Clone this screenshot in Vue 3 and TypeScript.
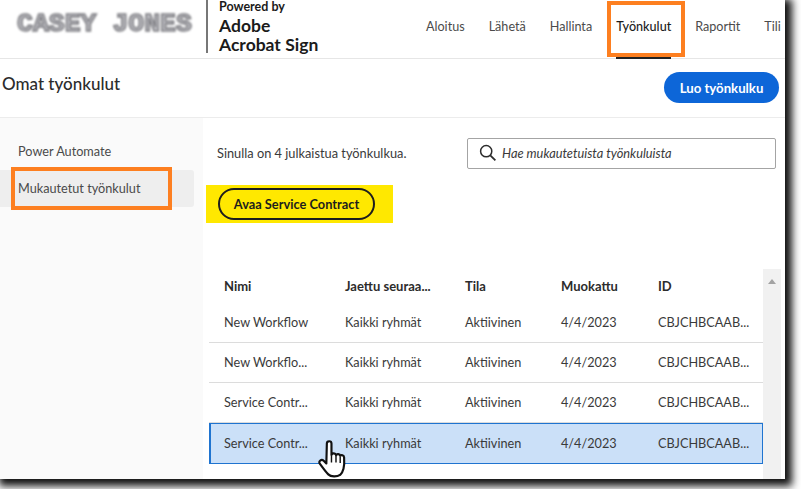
<script setup lang="ts">
const nav: string[] = ['Aloitus', 'Lähetä', 'Hallinta', 'Työnkulut', 'Raportit', 'Tili']
const rows = [
  { name: 'New Workflow', selected: false },
  { name: 'New Workflo...', selected: false },
  { name: 'Service Contr...', selected: false },
  { name: 'Service Contr...', selected: true },
]
</script>

<template>
  <div class="page">
    <div class="window">
      <header class="top">
        <div class="logo"><span>CASEY JONES</span></div>
        <div class="brand">
          <span class="powered">Powered by</span>
          <span class="adobe first">Adobe</span>
          <span class="adobe">Acrobat Sign</span>
        </div>
        <nav class="nav">
          <span v-for="n in nav" :key="n" class="nav-item" :class="{ active: n === 'Työnkulut' }">{{ n }}</span>
        </nav>
      </header>
      <div class="title-row">
        <h1>Omat työnkulut</h1>
        <button class="create">Luo työnkulku</button>
      </div>
      <div class="body">
        <aside class="side">
          <div class="side-item">Power Automate</div>
          <div class="side-item current">Mukautetut työnkulut</div>
        </aside>
        <main class="main">
          <div class="tools">
            <span class="count">Sinulla on 4 julkaistua työnkulkua.</span>
            <div class="search">
              <svg width="18" height="18" viewBox="0 0 18 18" fill="none" stroke="#2c2c2c" stroke-width="1.5">
                <circle cx="7.2" cy="7.2" r="5.6" />
                <path d="M11.3 11.3 L16.4 16.4" stroke-width="1.8" />
              </svg>
              <span>Hae mukautetuista työnkuluista</span>
            </div>
          </div>
          <div class="mark">
            <button class="open">Avaa Service Contract</button>
          </div>
          <div class="table-wrap">
            <div class="table">
              <div class="row head">
                <span>Nimi</span><span>Jaettu seuraa...</span><span>Tila</span><span>Muokattu</span><span>ID</span>
              </div>
              <div v-for="(r, i) in rows" :key="i" class="row" :class="{ selected: r.selected }">
                <span>{{ r.name }}</span><span>Kaikki ryhmät</span><span>Aktiivinen</span><span>4/4/2023</span><span>CBJCHBCAAB...</span>
              </div>
            </div>
            <div class="scroll"><i></i></div>
          </div>
        </main>
      </div>
      <div class="hl hl-nav"></div>
      <div class="hl hl-side"></div>
      <svg class="hand" width="31" height="39" viewBox="0 0 30 38">
        <path d="M9.5 3.5c0-3 4.500-3 4.500 0v11c.6-2 4-2 4.400.3.8-1.600 3.800-1.300 4.100.7 1-1.200 3.600-.8 3.800 1.500.3 4 .2 8-.6 11-.6 2.600-1.800 4.500-3.300 6-3 2-9 2-11.500-.5-2.500-2.500-5.400-6.500-8.300-10.500-1.700-2.300 1.600-4.800 3.800-2.700l2.600 2.500z" fill="#fff" stroke="#111" stroke-width="2.1" stroke-linejoin="round" />
        <path d="M14 15v7M18.400 15v7M22.500 16.500v6" stroke="#111" stroke-width="1.400" fill="none" />
      </svg>
    </div>
  </div>
</template>

<style>
html, body { margin: 0; background: #fff; }
</style>

<style scoped>
.page {
  width: 801px;
  height: 489px;
  overflow: hidden;
  background: #fff;
  font-family: "Lato", "Noto Sans", sans-serif;
  color: #2f2f2f;
}
.window {
  position: relative;
  width: 785px;
  height: 479px;
  background: #fff;
  box-shadow: 3px 3px 8px 4px #111;
}
.top {
  display: flex;
  align-items: flex-start;
  height: 59px;
  box-sizing: border-box;
  border-bottom: 1px solid #e6e6e6;
}
.logo {
  width: 206px;
  height: 58px;
  padding: 9px 0 0 17px;
  box-sizing: border-box;
  overflow: hidden;
  font-family: "Liberation Mono", monospace;
  font-weight: 700;
  font-size: 26.5px;
  line-height: 30px;
  white-space: nowrap;
  color: #bdbdc2;
  -webkit-text-stroke: 1.6px #7d7d82;
}
.logo span { display: inline-block; filter: blur(.8px); }
.brand {
  display: flex;
  flex-direction: column;
  height: 53px;
  padding-left: 11px;
  border-left: 2px solid #777;
  color: #1b1b1b;
  font-weight: 700;
  white-space: nowrap;
}
.powered { font-size: 12.5px; line-height: 14px; }
.adobe { font-size: 17.5px; line-height: 19px; }
.adobe.first { margin-top: 2px; }
.nav {
  margin-left: auto;
  display: flex;
  height: 100%;
  width: 385px;
  gap: 24px;
  padding-left: 26px;
  box-sizing: border-box;
  font-size: 12.6px;
}
.nav-item {
  position: relative;
  height: 58px;
  line-height: 54px;
  color: #4b4b4b;
  white-space: nowrap;
}
.nav-item.active { color: #1c1c1c; font-weight: 500; }
.nav-item.active::after {
  content: "";
  position: absolute;
  left: 0;
  right: 0;
  bottom: -1px;
  height: 2px;
  background: #222;
}
.title-row {
  height: 59px;
  box-sizing: border-box;
  border-bottom: 1px solid #ececec;
  display: flex;
  align-items: flex-start;
  justify-content: space-between;
  padding: 14px 6px 0 2px;
}
h1 {
  margin: 0;
  font-size: 17px;
  font-weight: 500;
  line-height: 22px;
  color: #2c2c2c;
}
.create {
  width: 115px;
  height: 31px;
  margin-top: -1px;
  padding: 0;
  border: 0;
  border-radius: 16px;
  background: #0d66d8;
  color: #fff;
  font: 700 13.2px "Lato", sans-serif;
}
.body { display: flex; height: 361px; }
.side {
  width: 203px;
  box-sizing: border-box;
  background: #fafafa;
  padding-top: 15px;
  font-size: 12.7px;
  color: #4a4a4a;
}
.side-item {
  height: 37px;
  line-height: 37px;
  padding-left: 18px;
  margin-right: 9px;
}
.side-item.current {
  background: #eeeeee;
  border-radius: 0 3px 3px 0;
}
.main { flex: 1; min-width: 0; background: #fff; }
.tools {
  display: flex;
  align-items: center;
  height: 32px;
  margin-top: 19px;
  padding-left: 14px;
  font-size: 12.8px;
}
.count { width: 250px; color: #3a3a3a; white-space: nowrap; }
.search {
  display: flex;
  align-items: center;
  gap: 5px;
  width: 309px;
  height: 31px;
  box-sizing: border-box;
  border: 1px solid #a4a4a4;
  border-radius: 2px;
  padding-left: 11px;
  font-style: italic;
  color: #3a3a3a;
}
.mark {
  display: flex;
  align-items: center;
  margin: 16px 0 0 3px;
  width: 175px;
  height: 38px;
  padding-left: 12px;
  background: #ffe800;
}
.open {
  width: 157px;
  height: 32px;
  padding: 0;
  box-sizing: border-box;
  border: 2px solid #1d1d1d;
  border-radius: 16px;
  background: #ffe800;
  color: #1d1d1d;
  font: 700 12.8px "Lato", sans-serif;
}
.table-wrap {
  display: flex;
  margin: 46px 0 0 6px;
  height: 210px;
}
.table { width: 554px; font-size: 12.7px; }
.row {
  display: grid;
  grid-template-columns: 121px 120px 96px 97px 1fr;
  align-items: center;
  height: 40px;
  box-sizing: border-box;
  padding-left: 15px;
  padding-bottom: 1px;
  border-bottom: 1px solid #dcdcdc;
  color: #3a3a3a;
  white-space: nowrap;
}
.row.head {
  height: 34px;
  border-bottom: 0;
  font-size: 13px;
  font-weight: 700;
  color: #2c2c2c;
}
.row.selected {
  background: #cbe0f8;
  border: 1px solid #1f74d0;
  border-left-width: 2px;
  padding-left: 13px;
  padding-bottom: 2px;
  height: 41px;
}
.scroll {
  width: 18px;
  background: #f1f1f1;
  position: relative;
}
.scroll i {
  position: absolute;
  left: 5px;
  top: 10px;
  border: 4.5px solid transparent;
  border-top: 0;
  border-bottom: 5px solid #a3a3a3;
}
.hl {
  position: absolute;
  border: 4px solid #fd7f20;
  box-sizing: border-box;
}
.hl-nav { left: 607px; top: 1px; width: 78px; height: 56px; }
.hl-side { left: 11px; top: 167px; width: 161px; height: 43px; }
.hand { position: absolute; left: 317px; top: 440px; }
</style>
